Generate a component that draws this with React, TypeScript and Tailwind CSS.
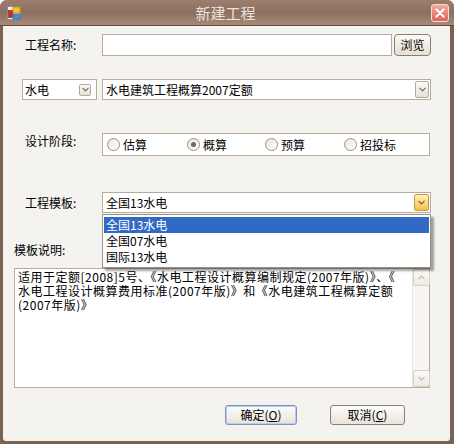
import React from "react";

function Chevron({ color = "#6b6b6b" }: { color?: string }) {
  return (
    <svg width="7" height="5" viewBox="0 0 7 5">
      <path d="M0.5 0.8 L3.5 3.8 L6.5 0.8" fill="none" stroke={color} strokeWidth="1.2" />
    </svg>
  );
}

function Radio({ checked, label }: { checked?: boolean; label: string }) {
  return (
    <div className="flex items-center gap-[3px]">
      <div className="w-[13px] h-[13px] rounded-full border border-[#9c9080] bg-gradient-to-br from-[#e9e5de] to-white flex items-center justify-center">
        {checked && <div className="w-[5px] h-[5px] rounded-full bg-[#6f6a63]" />}
      </div>
      <span>{label}</span>
    </div>
  );
}

export default function App() {
  return (
    <div className="w-[454px] h-[444px] bg-[#7b6253] rounded-t-[7px] overflow-hidden flex flex-col font-['Noto_Sans_CJK_SC',sans-serif] text-[12px] text-black leading-none">
      {/* Title bar */}
      <div className="h-[26px] relative flex items-center bg-gradient-to-b from-[#9c7e6d] via-[#8d6f60] to-[#a68a7a] border-b border-[#5e4a3f]">
        <div className="ml-[7px] w-[14px] h-[14px]">
          <svg width="14" height="14" viewBox="0 0 14 14">
            <rect x="0.5" y="0.5" width="13" height="13" fill="#eef0f2" stroke="#8a8f96" />
            <rect x="1.5" y="4.5" width="4" height="7" fill="#d42a1a" stroke="#8a1a10" strokeWidth="0.6" />
            <rect x="6" y="1" width="7" height="6" fill="#f7c21a" stroke="#b08000" strokeWidth="0.6" />
            <rect x="6" y="8" width="7" height="5" fill="#4a8be0" stroke="#2a5ea8" strokeWidth="0.6" />
          </svg>
        </div>
        <div className="flex-1 text-center text-[15px] text-[#eee3da] mr-[24px]">新建工程</div>
        <div className="absolute right-[5px] top-[4px] w-[18px] h-[18px] rounded-[3px] border border-[#f8ded8] bg-gradient-to-b from-[#f3aaa0] to-[#de6058] flex items-center justify-center">
          <svg width="10" height="10" viewBox="0 0 10 10">
            <path d="M1.5 1.5 L8.5 8.5 M8.5 1.5 L1.5 8.5" stroke="white" strokeWidth="2.2" strokeLinecap="round" />
          </svg>
        </div>
      </div>

      {/* Body */}
      <div className="flex-1 ml-[3px] mr-[4px] mb-[3px] bg-[#f5f3ef] flex flex-col rounded-b-[3px]">
        {/* Row 1 */}
        <div className="flex items-center mt-[8px]">
          <div className="w-[99px] pl-[22px]">工程名称:</div>
          <div className="w-[290px] h-[22px] bg-white border border-[#b7ab9c]" />
          <div className="ml-[2px] w-[37px] h-[22px] rounded-[4px] border border-[#8a7e70] bg-gradient-to-b from-[#fdfcfa] to-[#e6dfd2] flex items-center justify-center">
            浏览
          </div>
        </div>

        {/* Row 2 */}
        <div className="flex items-center mt-[23px]">
          <div className="ml-[19px] w-[75px] h-[21px] bg-white border border-[#b7ab9c] flex items-center">
            <span className="flex-1 pl-[2px]">水电</span>
            <div className="w-[12px] h-[12px] mr-[5px] rounded-[2px] border border-[#b4a898] bg-gradient-to-b from-[#fbfaf7] to-[#e8e1d5] flex items-center justify-center">
              <Chevron />
            </div>
          </div>
          <div className="ml-[5px] w-[329px] h-[21px] bg-white border border-[#b7ab9c] flex items-center">
            <span className="flex-1 pl-[3px]">水电建筑工程概算2007定额</span>
            <div className="w-[14px] h-[17px] mr-[1px] rounded-[2px] border border-[#b4a898] bg-gradient-to-b from-[#fbfaf7] to-[#e8e1d5] flex items-center justify-center">
              <Chevron />
            </div>
          </div>
        </div>

        {/* Row 3 */}
        <div className="flex items-center mt-[33px]">
          <div className="w-[99px] pl-[22px] self-start pt-[2px]">设计阶段:</div>
          <div className="w-[328px] h-[23px] bg-white border border-[#b7ab9c] flex items-center pl-[4px]">
            <div className="w-[80px]"><Radio label="估算" /></div>
            <div className="w-[78px]"><Radio checked label="概算" /></div>
            <div className="w-[79px]"><Radio label="预算" /></div>
            <div><Radio label="招投标" /></div>
          </div>
        </div>

        {/* Row 4 */}
        <div className="flex items-center mt-[36px]">
          <div className="w-[99px] pl-[22px]">工程模板:</div>
          <div className="relative w-[329px] h-[21px] bg-white border border-[#b7ab9c] flex items-center">
            <span className="flex-1 pl-[3px]">全国13水电</span>
            <div className="w-[15px] h-[17px] mr-[1px] rounded-[2px] border border-[#c49a48] bg-gradient-to-b from-[#fff2b8] to-[#f4bf48] flex items-center justify-center">
              <Chevron color="#7a5a20" />
            </div>
            {/* Dropdown list */}
            <div className="absolute left-[-1px] top-[21px] w-[329px] h-[54px] bg-white border border-[#9a9080] p-[1px] z-10 shadow-[3px_3px_2px_rgba(0,0,0,0.35)]">
              <div className="h-[16px] px-[2px] flex items-center bg-[#316ac5] text-white mt-[1px]">全国13水电</div>
              <div className="h-[16px] px-[2px] flex items-center">全国07水电</div>
              <div className="h-[16px] px-[2px] flex items-center">国际13水电</div>
            </div>
          </div>
        </div>

        {/* Row 5 label */}
        <div className="mt-[30px] pl-[11px] h-[14px] leading-[14px]">模板说明:</div>

        {/* Textarea */}
        <div className="mt-[11px] ml-[11px] w-[416px] h-[120px] bg-white border border-[#b7ab9c] flex">
          <div className="flex-1 pl-[3px] pt-[1px] leading-[14px] tracking-[0.5px] whitespace-nowrap overflow-hidden">
            <div>适用于定额[2008]5号、《水电工程设计概算编制规定(2007年版)》、《</div>
            <div>水电工程设计概算费用标准(2007年版)》和《水电建筑工程概算定额</div>
            <div>(2007年版)》</div>
          </div>
          <div className="w-[17px] h-full bg-[#f7f5f1] border-l border-[#ece8e1] flex flex-col justify-between">
            <div className="w-[17px] h-[17px] rounded-[2px] border border-[#d6cfc4] bg-gradient-to-b from-[#fbfaf8] to-[#eeeae3] flex items-center justify-center">
              <svg width="7" height="5" viewBox="0 0 7 5">
                <path d="M0.5 4.2 L3.5 1.2 L6.5 4.2" fill="none" stroke="#c2bab0" strokeWidth="1.2" />
              </svg>
            </div>
            <div className="w-[17px] h-[17px] rounded-[2px] border border-[#d6cfc4] bg-gradient-to-b from-[#fbfaf8] to-[#eeeae3] flex items-center justify-center">
              <Chevron color="#c2bab0" />
            </div>
          </div>
        </div>

        {/* Buttons */}
        <div className="flex mt-[17px]">
          <div className="ml-[222px] w-[72px] h-[20px] rounded-[3px] border border-[#7f95b8] bg-gradient-to-b from-[#fdfcfb] to-[#e9e4da] shadow-[inset_0_0_0_1px_#b3cff3] flex items-center justify-center">
            确定(<span className="underline">O</span>)
          </div>
          <div className="ml-[33px] w-[75px] h-[20px] rounded-[3px] border border-[#8a7e70] bg-gradient-to-b from-[#fdfcfb] to-[#e9e4da] flex items-center justify-center">
            取消(<span className="underline">C</span>)
          </div>
        </div>
      </div>
    </div>
  );
}
